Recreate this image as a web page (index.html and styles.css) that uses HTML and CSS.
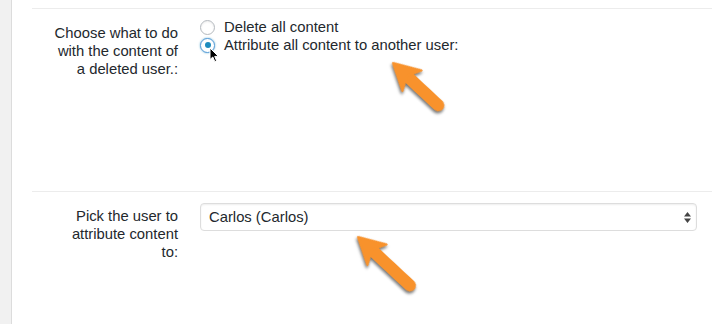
FILE: index.html
```html
<!DOCTYPE html>
<html>
<head>
<meta charset="utf-8">
<link rel="stylesheet" href="styles.css">
</head>
<body>
<div class="page">
  <div class="sidebar"></div>
  <div class="main">
    <div class="row row-delete">
      <div class="label">Choose what to do with the content of a deleted user.:</div>
      <div class="field radios">
        <div class="radio-item"><span class="radio"></span><span>Delete all content</span></div>
        <div class="radio-item"><span class="radio checked"></span><span>Attribute all content to another user:</span></div>
      </div>
    </div>
    <div class="row row-pick">
      <div class="label">Pick the user to attribute content to:</div>
      <div class="field select-field">
        <div class="select">
          <span>Carlos (Carlos)</span>
          <svg class="select-arrows" width="7" height="11" viewBox="0 0 7 11"><path d="M3.5 0 L7 4.5 L0 4.5 Z M3.5 11 L7 6.5 L0 6.5 Z" fill="#444"/></svg>
        </div>
      </div>
    </div>
  </div>
  <svg class="cursor" width="12" height="16" viewBox="0 0 12 16">
    <path d="M1 1 L1 12.5 L3.8 10 L5.8 14.6 L7.6 13.8 L5.7 9.4 L9.4 9.4 Z" fill="#000" stroke="#fff" stroke-width="1" stroke-linejoin="round"/>
  </svg>
  <svg class="arrows" width="712" height="324" viewBox="0 0 712 324">
    <g class="arrow" transform="translate(393 63) rotate(43)">
      <line x1="16" y1="0" x2="62" y2="0" stroke="#f8922c" stroke-width="12" stroke-linecap="round"/>
      <path d="M0 0 L26 -14 L19 0 L26 14 Z" fill="#f8922c" stroke="#f8922c" stroke-width="2" stroke-linejoin="round"/>
    </g>
    <g class="arrow" transform="translate(358 237) rotate(43)">
      <line x1="16" y1="0" x2="71" y2="0" stroke="#f8922c" stroke-width="12" stroke-linecap="round"/>
      <path d="M0 0 L26 -14 L19 0 L26 14 Z" fill="#f8922c" stroke="#f8922c" stroke-width="2" stroke-linejoin="round"/>
    </g>
  </svg>
</div>
</body>
</html>
```
FILE: styles.css
```css
html, body {
  margin: 0;
  padding: 0;
  background: #fff;
}
body {
  font-family: "Liberation Sans", Arial, sans-serif;
  font-size: 14.8px;
  color: #23282d;
}
.page {
  position: relative;
  display: flex;
  width: 712px;
  height: 324px;
  overflow: hidden;
}
.sidebar {
  width: 11px;
  background: #f1f1f1;
  border-right: 1px solid #dcdcdc;
  flex: none;
}
.main {
  flex: 1;
  padding: 8px 0 0 20px;
}
.row {
  display: flex;
  border-top: 1px solid #ececec;
}
.row-delete {
  height: 182px;
}
.row-pick {
  height: 132px;
}
.label {
  width: 126px;
  margin-left: 20px;
  flex: none;
  text-align: right;
  line-height: 18px;
  padding-top: 15px;
}
.field {
  margin-left: 22px;
}
.radios {
  padding-top: 9px;
}
.radio-item {
  display: flex;
  align-items: center;
  height: 18px;
  line-height: 18px;
}
.radio {
  box-sizing: border-box;
  width: 15px;
  height: 15px;
  border-radius: 50%;
  border: 1px solid #b4b9be;
  background: #fff;
  margin-right: 9px;
  display: flex;
  align-items: center;
  justify-content: center;
  box-shadow: inset 0 1px 2px rgba(0,0,0,0.08);
}
.radio.checked {
  border-color: #5b9dd9;
  box-shadow: 0 0 2px rgba(30,140,190,0.7);
}
.radio.checked::after {
  content: "";
  width: 6px;
  height: 6px;
  border-radius: 50%;
  background: #1e8cbe;
}
.select-field {
  flex: 1;
  padding-top: 11px;
  margin-right: 15px;
}
.select {
  box-sizing: border-box;
  height: 28px;
  border: 1px solid #ddd;
  border-radius: 4px;
  box-shadow: inset 0 1px 2px rgba(0,0,0,0.07);
  display: flex;
  align-items: center;
  justify-content: space-between;
  padding: 0 5px 0 8px;
  color: #23282d;
}
.select-arrows {
  display: block;
}
.cursor {
  position: absolute;
  left: 209px;
  top: 47px;
}
.arrows {
  position: absolute;
  left: 0;
  top: 0;
  pointer-events: none;
}
.arrow {
  filter: drop-shadow(1px 2px 1.5px rgba(0,0,0,0.55));
}
```
